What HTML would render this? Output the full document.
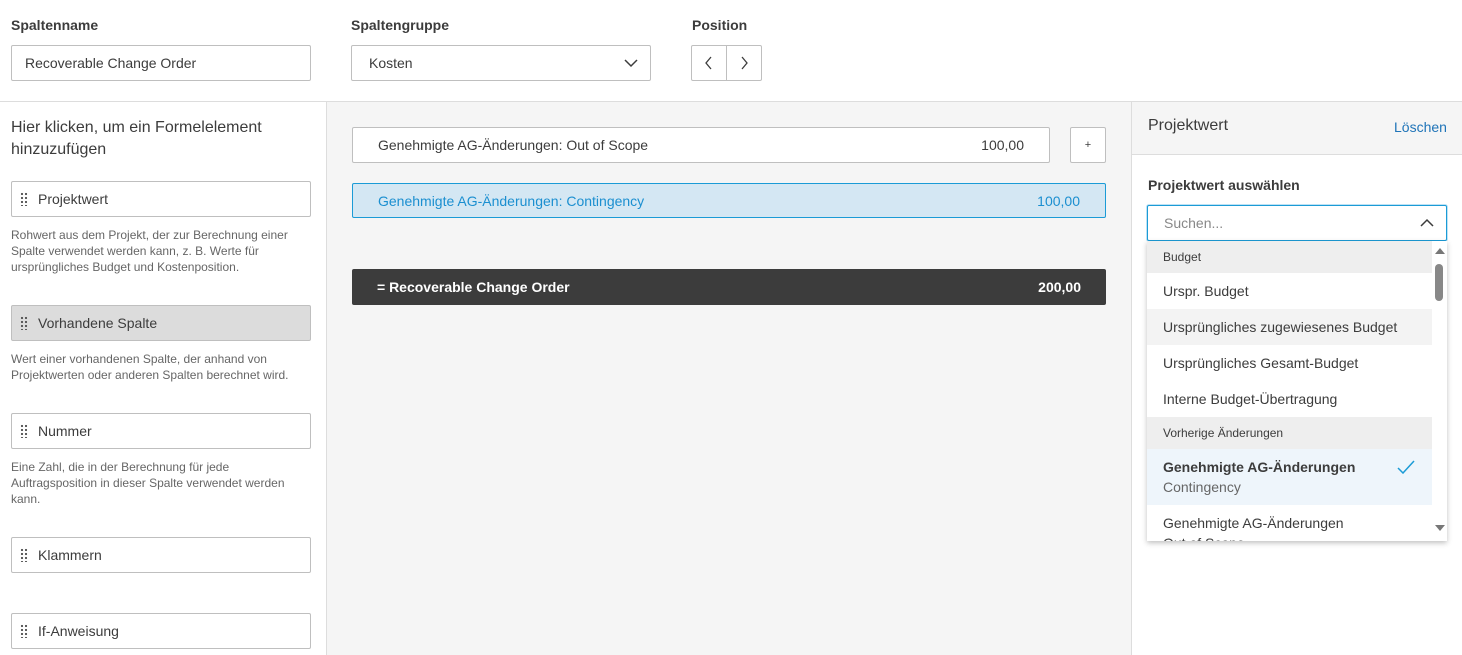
<!DOCTYPE html>
<html><head><meta charset="utf-8"><style>
*{box-sizing:border-box;margin:0;padding:0}
body{width:1462px;height:655px;overflow:hidden;background:#fff;font-family:"Liberation Sans",sans-serif;color:#3c3c3c;position:relative;font-size:14px}
.a{position:absolute}
.lbl{font-size:14px;font-weight:bold;color:#3c3c3c}
.inp{border:1px solid #bfbfbf;border-radius:2px;background:#fff;display:flex;align-items:center}
.grip{width:8px;height:14px;margin:0 10px 0 8px;background-image:radial-gradient(circle,#555 1px,transparent 1.3px);background-size:4px 4px}
.desc{font-size:12px;line-height:16px;color:#666;white-space:nowrap}
.item{position:absolute;left:0;width:285px;display:flex;align-items:center;padding-left:16px;font-size:14px;color:#3c3c3c}
</style></head><body>
<!-- header -->
<div class="a lbl" style="left:11px;top:17px">Spaltenname</div>
<div class="a lbl" style="left:351px;top:17px">Spaltengruppe</div>
<div class="a lbl" style="left:692px;top:17px">Position</div>
<div class="a inp" style="left:11px;top:45px;width:300px;height:36px;padding-left:13px">Recoverable Change Order</div>
<div class="a inp" style="left:351px;top:45px;width:300px;height:36px;padding-left:17px">Kosten
<svg class="a" style="right:12px;top:12px" width="14" height="10"><path d="M1 2l6 6 6-6" fill="none" stroke="#3c3c3c" stroke-width="1.5"/></svg></div>
<div class="a inp" style="left:691px;top:45px;width:71px;height:36px">
<div style="width:35px;height:34px;border-right:1px solid #bfbfbf;position:relative"><svg class="a" style="left:12px;top:10px" width="10" height="14"><path d="M7 1L2 7l5 6" fill="none" stroke="#3c3c3c" stroke-width="1.3"/></svg></div>
<div style="width:35px;height:34px;position:relative"><svg class="a" style="left:13px;top:10px" width="10" height="14"><path d="M2 1l5 6-5 6" fill="none" stroke="#3c3c3c" stroke-width="1.3"/></svg></div>
</div>
<div class="a" style="left:0;top:101px;width:1462px;height:1px;background:#ddd"></div>
<!-- left -->
<div class="a" style="left:326px;top:102px;width:1px;height:553px;background:#ddd"></div>
<div class="a" style="left:11px;top:117px;font-size:16px;line-height:22px;color:#3c3c3c">Hier klicken, um ein Formelelement<br>hinzuzufügen</div>
<div class="a inp" style="left:11px;top:181px;width:300px;height:36px"><div class="grip"></div>Projektwert</div>
<div class="a desc" style="left:11px;top:227px">Rohwert aus dem Projekt, der zur Berechnung einer<br>Spalte verwendet werden kann, z. B. Werte für<br>ursprüngliches Budget und Kostenposition.</div>
<div class="a inp" style="left:11px;top:305px;width:300px;height:36px;background:#dcdcdc"><div class="grip"></div>Vorhandene Spalte</div>
<div class="a desc" style="left:11px;top:351px">Wert einer vorhandenen Spalte, der anhand von<br>Projektwerten oder anderen Spalten berechnet wird.</div>
<div class="a inp" style="left:11px;top:413px;width:300px;height:36px"><div class="grip"></div>Nummer</div>
<div class="a desc" style="left:11px;top:459px">Eine Zahl, die in der Berechnung für jede<br>Auftragsposition in dieser Spalte verwendet werden<br>kann.</div>
<div class="a inp" style="left:11px;top:537px;width:300px;height:36px"><div class="grip"></div>Klammern</div>
<div class="a inp" style="left:11px;top:613px;width:300px;height:36px"><div class="grip"></div>If-Anweisung</div>
<!-- middle -->
<div class="a" style="left:327px;top:102px;width:804px;height:553px;background:#f5f5f5"></div>
<div class="a inp" style="left:352px;top:127px;width:698px;height:36px;padding:0 25px;justify-content:space-between"><span>Genehmigte AG-Änderungen: Out of Scope</span><span>100,00</span></div>
<div class="a inp" style="left:1070px;top:127px;width:36px;height:36px;justify-content:center;font-size:11px">+</div>
<div class="a inp" style="left:352px;top:183px;width:754px;height:35px;padding:0 25px;justify-content:space-between;background:#d4e7f3;border-color:#1b9bd6;color:#1b8fd0"><span>Genehmigte AG-Änderungen: Contingency</span><span>100,00</span></div>
<div class="a" style="left:352px;top:269px;width:754px;height:36px;background:#3c3c3c;border-radius:2px;color:#fff;font-weight:bold;display:flex;align-items:center;justify-content:space-between;padding:0 25px"><span>= Recoverable Change Order</span><span>200,00</span></div>
<!-- right -->
<div class="a" style="left:1131px;top:102px;width:1px;height:553px;background:#ddd"></div>
<div class="a" style="left:1132px;top:102px;width:330px;height:53px;background:#f5f5f5;border-bottom:1px solid #ddd"></div>
<div class="a" style="left:1148px;top:117px;font-size:16px">Projektwert</div>
<div class="a" style="left:1394px;top:119px;font-size:14px;color:#1f74b8">Löschen</div>
<div class="a lbl" style="left:1148px;top:177px">Projektwert auswählen</div>
<div class="a" style="left:1147px;top:410px;width:1px;height:36px;background:#555"></div>
<div class="a inp" style="left:1147px;top:205px;width:300px;height:36px;border-color:#1b9bd6;padding-left:16px;color:#888;box-shadow:0 0 0 1px #bde2f5">Suchen...
<svg class="a" style="right:12px;top:12px" width="14" height="10"><path d="M1 8l6-6 6 6" fill="none" stroke="#3c3c3c" stroke-width="1.5"/></svg></div>
<div class="a" style="left:1147px;top:241px;width:300px;height:300px;background:#fff;box-shadow:0 2px 5px rgba(0,0,0,.25);overflow:hidden">
<div class="item" style="top:0;height:32px;background:#eee;font-size:12px">Budget</div>
<div class="item" style="top:32px;height:36px">Urspr. Budget</div>
<div class="item" style="top:68px;height:36px;background:#f3f3f3">Ursprüngliches zugewiesenes Budget</div>
<div class="item" style="top:104px;height:36px">Ursprüngliches Gesamt-Budget</div>
<div class="item" style="top:140px;height:36px">Interne Budget-Übertragung</div>
<div class="item" style="top:176px;height:32px;background:#eee;font-size:12px">Vorherige Änderungen</div>
<div class="item" style="top:208px;height:56px;background:#eef5fb;line-height:20px;display:block;padding-top:8px"><b>Genehmigte AG-Änderungen</b><br><span style="color:#666">Contingency</span>
<svg class="a" style="left:250px;top:11px" width="18" height="14"><path d="M1 8l5 5 11-12" fill="none" stroke="#1b9bd6" stroke-width="1.5"/></svg></div>
<div class="item" style="top:264px;height:56px;display:block;padding-top:8px;line-height:20px">Genehmigte AG-Änderungen<br>Out of Scope</div>
<svg class="a" style="left:288px;top:6px" width="10" height="8"><path d="M0 7l5-6 5 6z" fill="#777"/></svg>
<div class="a" style="left:288px;top:23px;width:8px;height:37px;border-radius:4px;background:#888"></div>
<svg class="a" style="left:288px;top:283px" width="10" height="8"><path d="M0 1l5 6 5-6z" fill="#777"/></svg>
</div>
</body></html>
